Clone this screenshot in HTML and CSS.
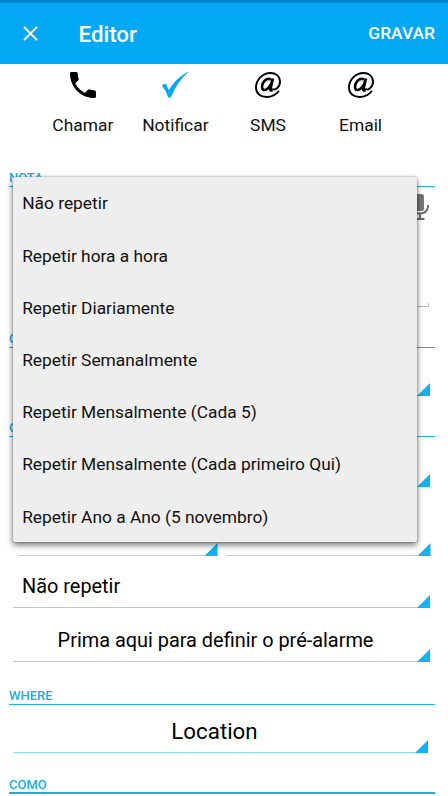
FILE: index.html
```html
<!DOCTYPE html>
<html lang="pt">
<head>
<meta charset="utf-8">
<title>Editor</title>
<link rel="stylesheet" href="styles.css">
</head>
<body>
<header class="appbar">
  <svg class="close" viewBox="0 0 16 16"><path d="M1 1 15 15M15 1 1 15"/></svg>
  <h1>Editor</h1>
  <span class="save">GRAVAR</span>
</header>
<nav class="actions">
  <div class="action">
    <svg viewBox="0 0 26 26"><path d="M0 1.4Q0 0 1.4 0H6.3Q7.6 0 7.700 1.4Q7.800 4.3 8.600 6.800Q8.900 7.700 8.200 8.400L5.200 11.300C7.400 15.600 10.600 18.700 14.800 20.900L17.700 17.900Q18.400 17.200 19.300 17.500Q21.900 18.300 24.700 18.400Q26 18.500 26 19.800V24.600Q26 26 24.600 26C11 26 0 15 0 1.4Z"/></svg>
    <span>Chamar</span>
  </div>
  <div class="action">
    <svg viewBox="0 0 26 26"><path fill="#03a9f4" d="M0 13.8Q1.2 11 4.3 12.3Q5.3 14.4 6.7 18.3Q13.8 6.3 25.5 0L26 .6Q15.5 9.3 9.2 24.8Q7.3 26.4 6.2 25.3Q3.8 18.2 0 13.8Z"/></svg>
    <span>Notificar</span>
  </div>
  <div class="action">
    <svg class="at" viewBox="0 0 26 26"><path d="M17.500 16.500C18.500 19.500 25.200 16 25 9.500C24.800 3.800 20.500 1 15.500 1C7.500 1 1 8 1 15.500C1 21.500 5.500 25 11.500 25C16.500 25 21 23 24 18.800"/><path class="bowl" d="M15.800 7.300C11 5.500 7 10.500 7 14.800C7 19.800 12.300 19 15.500 12.500"/><path class="stem" d="M17.800 6.500 15.300 16.800Q15.200 18.800 17.500 18"/></svg>
    <span>SMS</span>
  </div>
  <div class="action">
    <svg class="at" viewBox="0 0 26 26"><path d="M17.500 16.500C18.500 19.500 25.200 16 25 9.500C24.800 3.800 20.500 1 15.500 1C7.500 1 1 8 1 15.500C1 21.500 5.500 25 11.500 25C16.500 25 21 23 24 18.800"/><path class="bowl" d="M15.800 7.300C11 5.500 7 10.500 7 14.800C7 19.800 12.300 19 15.500 12.500"/><path class="stem" d="M17.800 6.500 15.300 16.800Q15.200 18.800 17.500 18"/></svg>
    <span>Email</span>
  </div>
</nav>
<main class="form">
  <h2 class="nota">NOTA</h2>
  <div class="note">
    <svg class="mic" viewBox="0 0 18 27"><rect x="4" y="0" width="9" height="17" rx="2.500"/><path d="M0 11V13Q1 19.500 8.500 19.500Q16 19.500 17 13V11M9 20V25M4.500 25H13.500"/></svg>
  </div>
  <h2 class="quem">Q</h2>
  <div class="spinner r1"></div>
  <h2 class="quando">Q</h2>
  <div class="spinner r2"></div>
  <div class="pair"><div class="spinner"></div><div class="spinner"></div></div>
  <div class="spinner repeat">Não repetir</div>
  <div class="spinner alarm"><span>Prima aqui para definir o pré-alarme</span></div>
  <h2 class="where">WHERE</h2>
  <div class="spinner location"><span>Location</span></div>
  <h2 class="como">COMO</h2>
</main>
<ul class="menu">
  <li><span>Não repetir</span></li>
  <li><span>Repetir hora a hora</span></li>
  <li><span>Repetir Diariamente</span></li>
  <li><span>Repetir Semanalmente</span></li>
  <li><span>Repetir Mensalmente (Cada 5)</span></li>
  <li><span>Repetir Mensalmente (Cada primeiro Qui)</span></li>
  <li><span>Repetir Ano a Ano (5 novembro)</span></li>
</ul>
</body>
</html>
```
FILE: styles.css
```css
* { box-sizing: border-box; }
body {
  margin: 0;
  height: 796px;
  overflow: hidden;
  position: relative;
  background: #fff;
  color: #111;
  font-family: Roboto, sans-serif;
}
h1, h2, ul { margin: 0; padding: 0; }
.appbar {
  height: 63.5px;
  border-top: 3px solid #0288d1;
  background: #03a9f4;
  color: #fff;
  display: flex;
  align-items: center;
  padding: 0 13px 0 23px;
}
.close { width: 15px; height: 15px; fill: none; stroke: #fff; stroke-width: 2; }
.appbar h1 { margin-left: 40.500px; padding-top: 1px; font-size: 22.300px; font-weight: 500; line-height: 30px; }
.save { margin-left: auto; font-size: 17.400px; font-weight: 500; }
.actions { display: flex; padding: 8.500px 0 0 36.500px; height: 100.500px; }
.action { width: 92.600px; display: flex; flex-direction: column; align-items: center; }
.action svg { width: 26px; height: 26px; }
.action span { margin-top: 16px; font-size: 17.400px; line-height: 22px; }
.at { fill: none; stroke: #000; stroke-width: 1.900; }
.at .bowl { stroke-width: 2.600; }
.at .stem { stroke-width: 3; }
.form { padding: 0 13px 0 9px; }
.form h2 {
  height: 23px;
  padding-top: 6px;
  border-bottom: 1px solid #20aee0;
  color: #20aee0;
  font-size: 13px;
  font-weight: 500;
  line-height: 15px;
}
.note {
  height: 120px;
  margin: 0 6px 0 4px;
  display: flex;
  justify-content: flex-end;
  padding-top: 7px;
  background: linear-gradient(#bbb, #bbb) right bottom / 1px 4px no-repeat, linear-gradient(#bbb, #bbb) right bottom / 100% 1px no-repeat;
}
.mic { width: 18px; height: 27px; fill: #777; }
.mic path { fill: none; stroke: #666; stroke-width: 1.800; }
.spinner {
  position: relative;
  margin: 0 5px 0 4px;
  border-bottom: 1px solid #8fdbfb;
  color: #000;
  font-size: 19.900px;
}
.spinner::after {
  content: "";
  position: absolute;
  right: 0;
  bottom: -1px;
  width: 13px;
  height: 13px;
  background: #12b2f3;
  clip-path: polygon(100% 0, 100% 100%, 0 100%);
}
.form .quem { margin-top: 18px; }
.r1 { height: 48px; }
.form .quando { margin-top: 18px; }
.r2 { height: 50px; }
.pair { display: grid; grid-template-columns: 200px 205px; gap: 8px; margin-left: 8.500px; }
.pair .spinner { height: 69px; margin: 0; }
.repeat { height: 52px; padding: 19px 0 0 9px; line-height: 24px; }
.alarm { height: 54px; padding: 21px 12px 0 0; text-align: center; line-height: 24px; }
.form .where { margin-top: 20px; }
.location { height: 48px; margin-right: 7px; padding: 13px 12px 0 0; text-align: center; font-size: 22.300px; line-height: 26px; }
.form .como { margin-top: 18px; border-bottom-width: 2px; }
.menu {
  position: absolute;
  left: 13px;
  top: 177px;
  width: 404px;
  height: 365px;
  padding-top: .4px;
  list-style: none;
  background: #eee;
  border-radius: 2px;
  box-shadow: 0 3px 6px rgba(0,0,0,.55), 0 0 2px rgba(0,0,0,.4);
}
.menu li { height: 52.200px; padding-left: 9.200px; display: flex; align-items: center; font-size: 17.350px; }
```
